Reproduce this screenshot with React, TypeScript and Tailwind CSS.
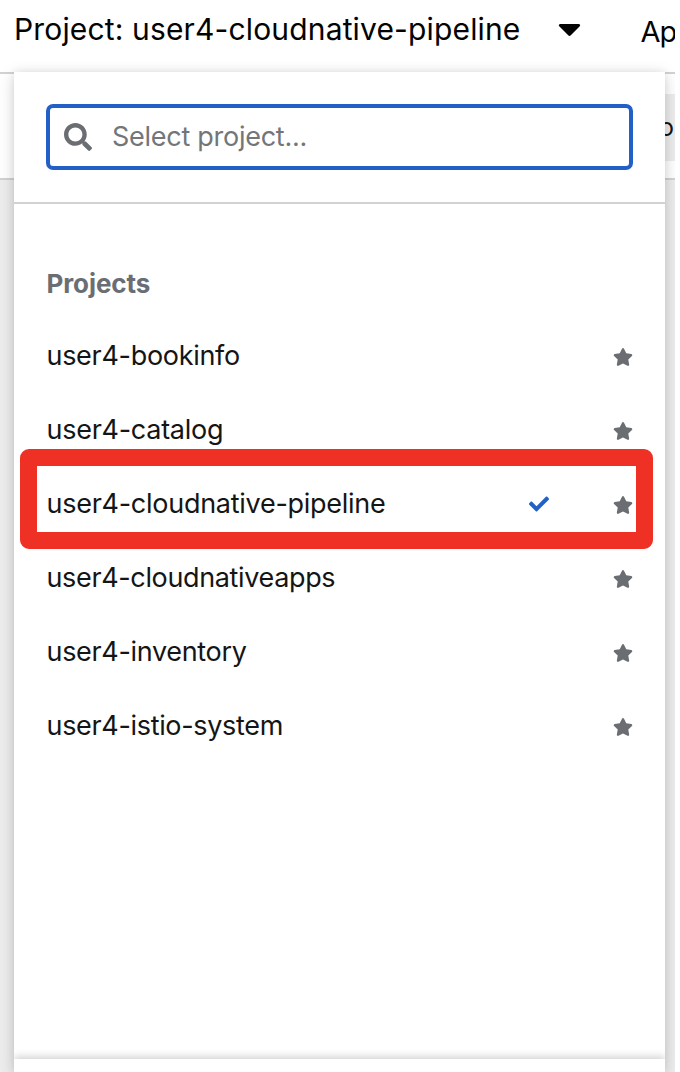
import { FaCaretDown, FaCheck, FaSearch, FaStar } from "react-icons/fa";

const projects = [
  { name: "user4-bookinfo", tracking: "tracking-[-0.3px]" },
  { name: "user4-catalog", tracking: "tracking-[-0.27px]" },
  { name: "user4-cloudnative-pipeline", tracking: "tracking-[-0.27px]", selected: true },
  { name: "user4-cloudnativeapps", tracking: "tracking-[-0.36px]" },
  { name: "user4-inventory", tracking: "tracking-[-0.33px]" },
  { name: "user4-istio-system", tracking: "tracking-[-0.33px]" },
];

function ProjectRow({ name, tracking, selected }: { name: string; tracking: string; selected?: boolean }) {
  return (
    <li className="flex h-[74px] items-center pr-8 pl-[32.5px] text-[27px] text-[#151515]">
      <span className={`flex-1 whitespace-nowrap ${tracking}`}>{name}</span>
      {selected && <FaCheck className="mr-16 -mt-px size-5 text-[#2162c6]" />}
      <FaStar className="mt-0.5 h-[18px] w-[20px] text-[#6a6e73]" />
    </li>
  );
}

function ProjectMenu() {
  return (
    <div className="absolute top-[72px] left-[14px] flex h-[1000px] w-[651px] flex-col bg-white shadow-[0_4px_16px_rgba(3,3,3,0.16),0_0_8px_rgba(3,3,3,0.08)]">
      <div className="h-[132px] border-b-2 border-[#d2d2d2] px-8 pt-8">
        <div className="flex h-[66px] items-center gap-5 rounded-[7px] border-4 border-[#2260c8] pl-3.5">
          <FaSearch className="size-7 text-[#6a6e73]" />
          <span className="text-[27px] tracking-[-0.27px] text-[#737679]">Select project...</span>
        </div>
      </div>
      <h2 className="pt-[60px] pl-[32.5px] text-[26px] leading-[40px] font-bold tracking-[-0.1px] text-[#6a6e73]">Projects</h2>
      <ul className="mt-[15px] flex-1">
        {projects.map((p) => (
          <ProjectRow key={p.name} {...p} />
        ))}
      </ul>
      <div className="h-[13px] bg-white shadow-[0_-2px_8px_rgba(3,3,3,0.2)] [clip-path:inset(-12px_0_0_0)]" />
      <div className="absolute top-[377px] left-[5.5px] h-[100px] w-[633px] rounded-[9px] border-[17px] border-[#ee3124]" />
    </div>
  );
}

export default function App() {
  return (
    <div className="h-[1072px] w-[680px] overflow-hidden bg-white font-['Inter','Noto_Sans',sans-serif]">
      <div className="relative flex h-[1072px] w-[675px] flex-col overflow-hidden bg-[#ededed]">
        <header className="flex h-[74px] shrink-0 items-start border-b-2 border-[#d2d2d2] bg-white pt-2.5 pl-[14px] text-[30px] leading-[40px] text-[#030303]">
          <span className="-mt-px w-[543.5px] shrink-0 whitespace-nowrap tracking-[0.15px]">Project: user4-cloudnative-pipeline</span>
          <FaCaretDown className="h-[37px] w-[23px] shrink-0" />
          <span className="shrink-0 pt-0.5 pl-[60px] text-[29px] tracking-[-1px] whitespace-nowrap">Ap</span>
        </header>
        <div className="flex h-[106px] shrink-0 items-start justify-end border-b-2 border-[#d2d2d2] bg-white pt-5">
          <span className="flex h-[67px] w-24 items-center justify-end bg-[#ededed] pr-px text-[25px] text-[#151515]">o</span>
        </div>
        <ProjectMenu />
      </div>
    </div>
  );
}
